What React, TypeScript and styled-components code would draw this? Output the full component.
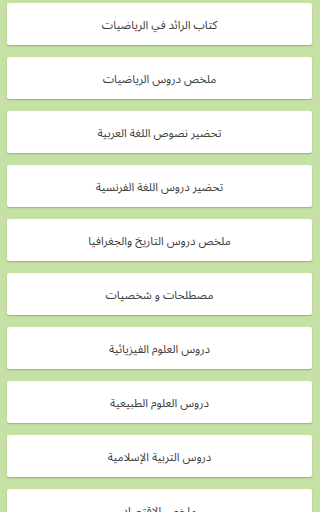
import React from 'react';
import styled, { createGlobalStyle } from 'styled-components';

const GlobalStyle = createGlobalStyle`
  html, body {
    margin: 0;
    padding: 0;
    background: #c5e1a5;
  }
  body {
    font-family: 'Noto Sans Arabic UI', 'Noto Sans Arabic', 'Noto Naskh Arabic', 'DejaVu Sans', sans-serif;
  }
`;

const Page = styled.div`
  display: flex;
  flex-direction: column;
  gap: 12px;
  padding: 3px 8px 12px 7px;
  height: 512px;
  overflow: hidden;
  box-sizing: border-box;
`;

const Card = styled.div`
  flex: 0 0 auto;
  height: 42px;
  display: flex;
  align-items: center;
  justify-content: center;
  background: #ffffff;
  border-radius: 2px;
  box-shadow: 0 1px 1.5px rgba(0, 0, 0, 0.22);
`;

const Label = styled.span`
  direction: rtl;
  font-size: 11.5px;
  color: #404040;
`;

const items = [
  'كتاب الرائد في الرياضيات',
  'ملخص دروس الرياضيات',
  'تحضير نصوص اللغة العربية',
  'تحضير دروس اللغة الفرنسية',
  'ملخص دروس التاريخ والجغرافيا',
  'مصطلحات و شخصيات',
  'دروس العلوم الفيزيائية',
  'دروس العلوم الطبيعية',
  'دروس التربية الإسلامية',
  'ملخص الاقتصاد',
];

const App: React.FC = () => (
  <>
    <GlobalStyle />
    <Page>
      {items.map((item) => (
        <Card key={item}>
          <Label>{item}</Label>
        </Card>
      ))}
    </Page>
  </>
);

export default App;
